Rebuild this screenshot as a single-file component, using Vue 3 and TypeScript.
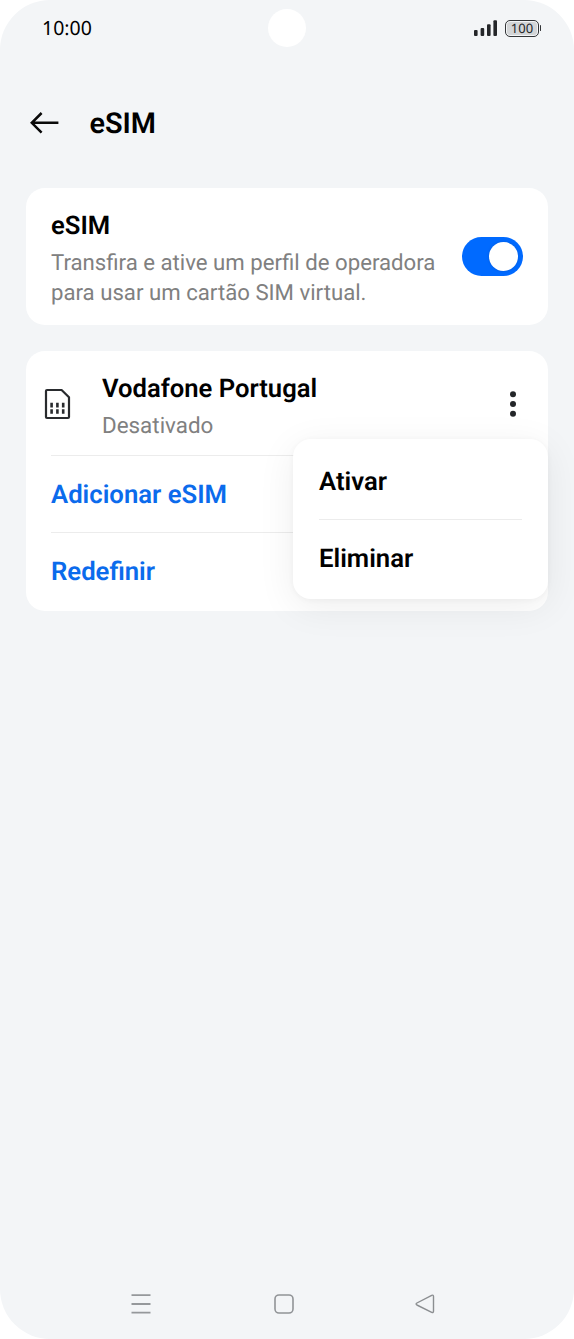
<script setup lang="ts">
import { ref } from 'vue'

const enabled = ref<boolean>(true)
const actions: string[] = ['Adicionar eSIM', 'Redefinir']
const menuItems: string[] = ['Ativar', 'Eliminar']
</script>

<template>
  <div class="screen">
    <header class="status">
      <span class="time">10:00</span>
      <span class="camera"></span>
      <span class="indicators">
        <svg class="signal" width="24" height="18" viewBox="0 0 24 18" fill="#242629">
          <rect x="0" y="10.9" width="3.6" height="6.2" rx="1" />
          <rect x="6.6" y="9" width="3.6" height="8.1" rx="1" />
          <rect x="13" y="5.2" width="3.6" height="11.9" rx="1" />
          <rect x="19.4" y="1.2" width="3.6" height="15.9" rx="1" />
        </svg>
        <span class="battery">100</span>
      </span>
    </header>

    <div class="titlebar">
      <svg class="back" width="30" height="24" viewBox="0 0 30 24" fill="none" stroke="#0a0a0a" stroke-width="2.5">
        <path d="M29.4 11.8H3M12.6 2L2.8 11.8L12.6 21.6" />
      </svg>
      <h1>eSIM</h1>
    </div>

    <main>
      <section class="card toggle-card">
        <div class="copy">
          <h2>eSIM</h2>
          <p>Transfira e ative um perfil de operadora<br />para usar um cartão SIM virtual.</p>
        </div>
        <button class="switch" :class="{ on: enabled }" aria-label="eSIM" @click="enabled = !enabled">
          <span class="knob"></span>
        </button>
      </section>

      <section class="card list">
        <div class="carrier">
          <svg class="sim" width="28" height="32" viewBox="0 0 28 32" fill="none" stroke="#292b2e" stroke-width="2.2">
            <path d="M3 2H17.6L25 9.2V29Q25 30 24 30H3Q2 30 2 29V3Q2 2 3 2Z" stroke-linejoin="round" />
            <path d="M7.6 14.8V19.6M13.4 14.8V19.6M19.2 14.8V19.6M7.6 21.2V25.8M13.4 21.2V25.8M19.2 21.2V25.8" stroke-width="2.6" />
          </svg>
          <div class="names">
            <h2>Vodafone Portugal</h2>
            <p>Desativado</p>
          </div>
          <svg class="dots" width="8" height="28" viewBox="0 0 8 28" fill="#242629">
            <circle cx="4" cy="4.2" r="3" />
            <circle cx="4" cy="14" r="3" />
            <circle cx="4" cy="23.8" r="3" />
          </svg>
        </div>
        <div v-for="action in actions" :key="action" class="action">{{ action }}</div>
        <div class="menu">
          <div v-for="item in menuItems" :key="item" class="item">{{ item }}</div>
        </div>
      </section>
    </main>

    <nav>
      <svg width="24" height="24" viewBox="0 0 24 24" fill="none" stroke="#95989b" stroke-width="1.8">
        <path d="M2.5 3.2H21.5M2.5 12H21.5M2.5 20.7H21.5" />
      </svg>
      <svg width="24" height="24" viewBox="0 0 24 24" fill="none" stroke="#919497" stroke-width="1.6">
        <rect x="3" y="3" width="18" height="18" rx="4" />
      </svg>
      <svg width="24" height="24" viewBox="0 0 24 24" fill="none" stroke="#8b8e91" stroke-width="1.4">
        <path d="M3.9 11L18.7 3.3Q20.5 2.7 20.5 4.4V19.2Q20.5 21 18.7 20.3L3.9 13Q2.3 12 3.9 11Z" stroke-linejoin="round" />
      </svg>
    </nav>
  </div>
</template>

<style>
body {
  background: #fff;
}
</style>

<style scoped>
.screen {
  box-sizing: border-box;
  width: 574px;
  height: 1339px;
  display: flex;
  flex-direction: column;
  background: #f3f5f7;
  border-radius: 50px;
  overflow: hidden;
  font-family: Roboto, 'Liberation Sans', sans-serif;
  text-rendering: geometricPrecision;
  color: #000;
}

h1,
h2,
p {
  margin: 0;
}

.status {
  height: 56px;
  display: grid;
  grid-template-columns: 1fr 38px 1fr;
  align-items: center;
  padding: 0 35px 0 42px;
  flex: none;
}

.time {
  font-family: 'Noto Sans', sans-serif;
  font-size: 19.5px;
  line-height: 26px;
  font-weight: 450;
  padding-bottom: 1px;
}

.camera {
  width: 38px;
  height: 38px;
  border-radius: 50%;
  background: #fff;
  margin-left: -3.5px;
}

.indicators {
  display: flex;
  justify-content: flex-end;
  align-items: center;
  gap: 7px;
}

.battery {
  position: relative;
  box-sizing: border-box;
  width: 34px;
  height: 17px;
  border: 1.5px solid #333538;
  border-radius: 5px;
  background: #d3d5d7;
  box-shadow: inset 0 0 0 1px #f3f5f7;
  font: 400 13px/15px 'Noto Sans', sans-serif;
  text-align: center;
  color: #242629;
}

.battery::after {
  content: '';
  position: absolute;
  right: -3px;
  top: 4px;
  width: 1.5px;
  height: 6px;
  border-radius: 1px;
  background: #333538;
}

.titlebar {
  height: 132px;
  flex: none;
  display: flex;
  align-items: center;
  gap: 31px;
  padding: 2px 0 0 28.5px;
  box-sizing: border-box;
}

h1 {
  font-size: 28.8px;
  line-height: 36px;
  font-weight: 600;
  padding-top: 2px;
}

h2 {
  font-size: 25.6px;
  line-height: 34px;
  font-weight: 600;
}

p {
  font-size: 22.4px;
  line-height: 29px;
  color: #808080;
}

main {
  flex: 1;
  display: flex;
  flex-direction: column;
  gap: 26px;
  padding: 0 26px;
}

.card {
  background: #fff;
  border-radius: 19px;
}

.toggle-card {
  box-sizing: border-box;
  height: 137px;
  padding: 0 25px;
  display: flex;
  justify-content: space-between;
  align-items: center;
}

.copy {
  padding-top: 4px;
}

.copy h2 {
  margin-bottom: 6px;
}

.copy p {
  font-size: 22.2px;
  line-height: 29.5px;
}

.switch {
  width: 61px;
  height: 39px;
  padding: 5px;
  border: 0;
  border-radius: 20px;
  background: #c7c9cc;
  display: flex;
}

.switch.on {
  background: #006aff;
  justify-content: flex-end;
}

.knob {
  width: 29px;
  height: 29px;
  border-radius: 50%;
  background: #fff;
  box-shadow: 0 0 3px rgba(0, 0, 0, 0.15);
}

.list {
  position: relative;
  height: 260px;
}

.carrier {
  box-sizing: border-box;
  height: 104px;
  padding: 2px 31px 0 18px;
  display: flex;
  align-items: center;
}

.names {
  flex: 1;
  margin-left: 30px;
  padding-top: 4px;
}

.names p {
  margin-top: 6px;
}

.action {
  box-sizing: border-box;
  height: 77px;
  margin: 0 26px 0 25px;
  border-top: 1px solid #ececec;
  font-size: 25.7px;
  line-height: 78px;
  font-weight: 600;
  color: #0b6bec;
}

.menu {
  position: absolute;
  right: 0;
  top: 88px;
  box-sizing: border-box;
  width: 255px;
  height: 160px;
  padding: 4px 26px;
  border-radius: 18px;
  background: #fff;
  box-shadow: 0 8px 38px rgba(0, 0, 0, 0.07), 0 1px 6px rgba(0, 0, 0, 0.04);
}

.item {
  box-sizing: border-box;
  height: 76px;
  font-size: 25.7px;
  line-height: 79px;
  font-weight: 600;
}

.item + .item {
  border-top: 1px solid #ececec;
}

nav {
  height: 70px;
  flex: none;
  display: flex;
  gap: 118px;
  padding: 23px 0 0 129px;
  box-sizing: border-box;
}

nav svg:nth-child(2) {
  margin: 0 -0.5px 0 0.5px;
}
</style>
